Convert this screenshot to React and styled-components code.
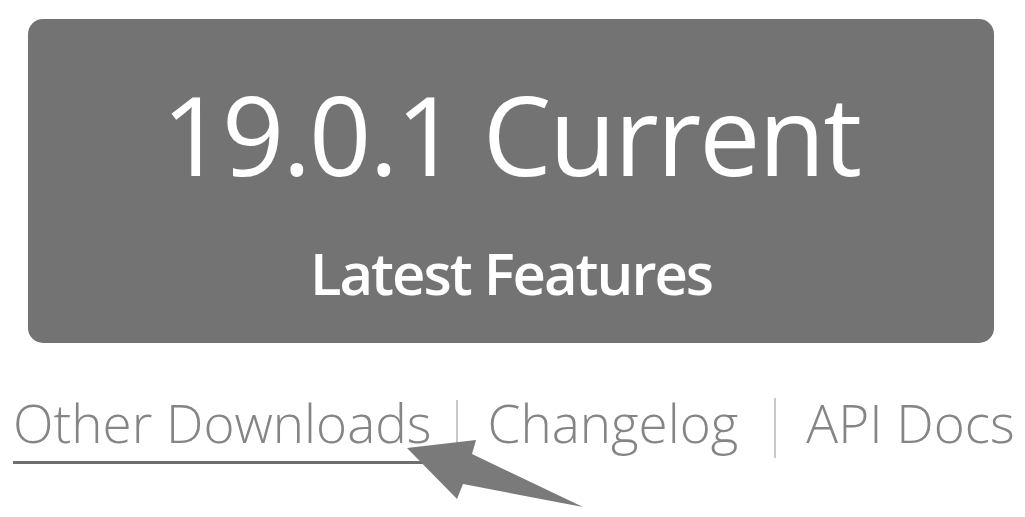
import styled, { createGlobalStyle } from "styled-components";

const GlobalStyle = createGlobalStyle`
  html, body {
    margin: 0;
    padding: 0;
    background: #ffffff;
  }
  body {
    font-family: "Open Sans", "Noto Sans", sans-serif;
  }
`;

export default function App() {
  return (
    <Page>
      <GlobalStyle />
      <DownloadButton>
        <Version>19.0.1 Current</Version>
        <Subtitle>Latest Features</Subtitle>
      </DownloadButton>

      <Links>
        <LinkItem $underlined>Other Downloads</LinkItem>
        <Separator />
        <LinkItem>Changelog</LinkItem>
        <Separator $tall />
        <LinkItem>API Docs</LinkItem>
      </Links>

      <Arrow viewBox="0 0 1025 517" aria-hidden="true">
        <polygon points="407,448 476,440 472,454 583,507 463,484 457,499" />
      </Arrow>
    </Page>
  );
}

const Page = styled.div`
  position: relative;
  width: 1025px;
  height: 517px;
  overflow: hidden;
  padding-top: 19px;
  box-sizing: border-box;
`;

const DownloadButton = styled.div`
  margin-left: 28px;
  width: 966px;
  height: 324px;
  box-sizing: border-box;
  padding-top: 60px;
  background-color: #737373;
  border-radius: 15px;
  display: flex;
  flex-direction: column;
  align-items: center;
  color: #ffffff;
`;

const Version = styled.div`
  font-size: 109px;
  line-height: 1;
  font-weight: 400;
  letter-spacing: -2px;
`;

const Subtitle = styled.div`
  margin-top: 56px;
  font-size: 58px;
  line-height: 1;
  font-weight: 600;
  letter-spacing: -2px;
`;

const Links = styled.div`
  margin-top: 53px;
  padding-left: 13px;
  display: flex;
  align-items: flex-start;
  font-size: 53px;
  line-height: 1;
  font-weight: 300;
  color: #858585;
`;

const LinkItem = styled.span`
  display: inline-block;
  padding-bottom: 12px;
  border-bottom: 3px solid ${(p) => (p.$underlined ? "#6e6e6e" : "transparent")};
  white-space: nowrap;
`;

const Separator = styled.span`
  display: inline-block;
  width: 2px;
  height: ${(p) => (p.$tall ? "60px" : "44px")};
  margin: ${(p) => (p.$tall ? "2px 30px 0 36px" : "4px 30px 0 24px")};
  background-color: #c8c8c8;
`;

const Arrow = styled.svg`
  position: absolute;
  left: 0;
  top: 0;
  width: 1025px;
  height: 517px;
  pointer-events: none;
  fill: #7a7a7a;
`;
